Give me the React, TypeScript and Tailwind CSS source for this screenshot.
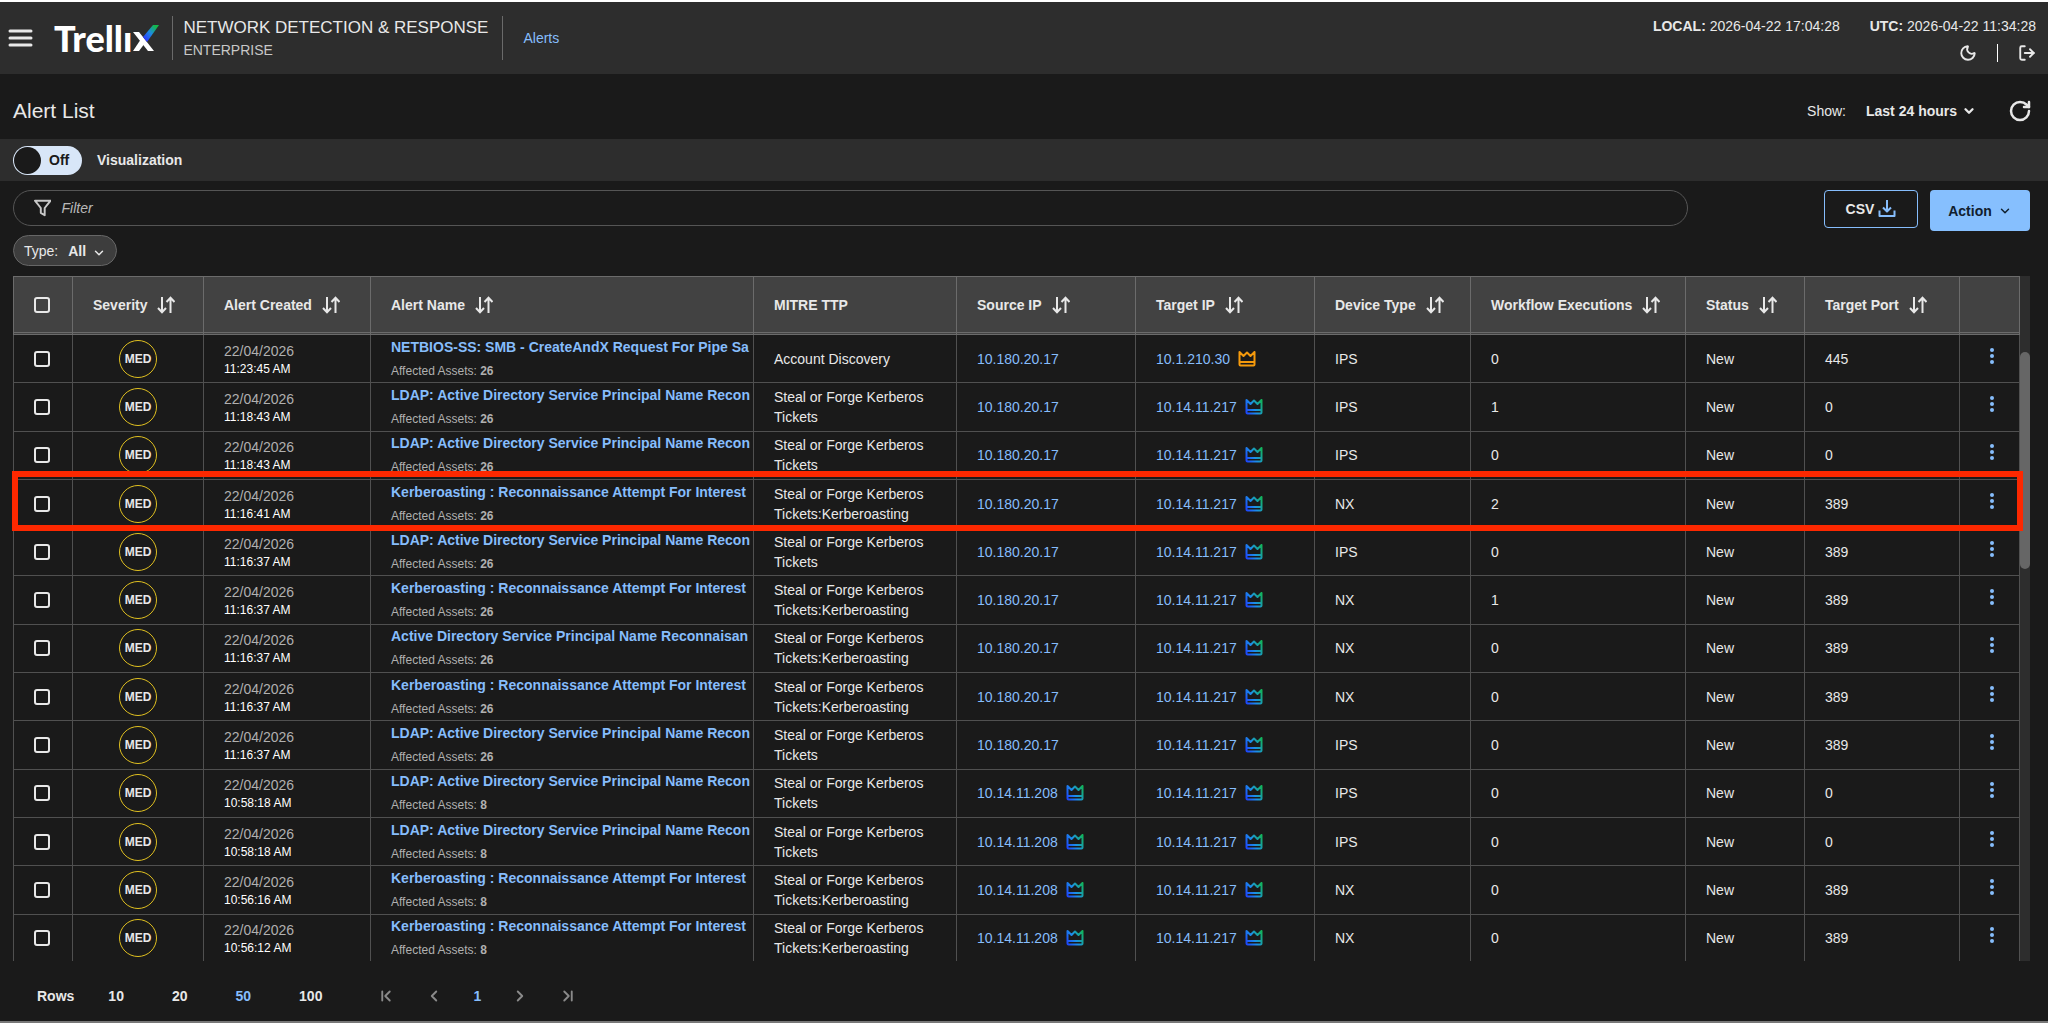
import { ChevronDown, ChevronFirst, ChevronLast, ChevronLeft, ChevronRight, LogOut, Moon, RotateCw } from 'lucide-react'

type Alert = {
  time: string
  name: string
  assets: number
  ttp: string
  source: string
  target: string
  device: 'IPS' | 'NX'
  workflows: number
  port: number
  highlight?: boolean
}

const LDAP = 'LDAP: Active Directory Service Principal Name Recon'
const KERB = 'Kerberoasting : Reconnaissance Attempt For Interest'
const ADSP = 'Active Directory Service Principal Name Reconnaisan'
const STEAL = 'Steal or Forge Kerberos Tickets'
const STEAL_KERB = 'Steal or Forge Kerberos Tickets:Kerberoasting'

const ALERTS: Alert[] = [
  { time: '11:23:45 AM', name: 'NETBIOS-SS: SMB - CreateAndX Request For Pipe Sa', assets: 26, ttp: 'Account Discovery', source: '10.180.20.17', target: '10.1.210.30', device: 'IPS', workflows: 0, port: 445 },
  { time: '11:18:43 AM', name: LDAP, assets: 26, ttp: STEAL, source: '10.180.20.17', target: '10.14.11.217', device: 'IPS', workflows: 1, port: 0 },
  { time: '11:18:43 AM', name: LDAP, assets: 26, ttp: STEAL, source: '10.180.20.17', target: '10.14.11.217', device: 'IPS', workflows: 0, port: 0 },
  { time: '11:16:41 AM', name: KERB, assets: 26, ttp: STEAL_KERB, source: '10.180.20.17', target: '10.14.11.217', device: 'NX', workflows: 2, port: 389, highlight: true },
  { time: '11:16:37 AM', name: LDAP, assets: 26, ttp: STEAL, source: '10.180.20.17', target: '10.14.11.217', device: 'IPS', workflows: 0, port: 389 },
  { time: '11:16:37 AM', name: KERB, assets: 26, ttp: STEAL_KERB, source: '10.180.20.17', target: '10.14.11.217', device: 'NX', workflows: 1, port: 389 },
  { time: '11:16:37 AM', name: ADSP, assets: 26, ttp: STEAL_KERB, source: '10.180.20.17', target: '10.14.11.217', device: 'NX', workflows: 0, port: 389 },
  { time: '11:16:37 AM', name: KERB, assets: 26, ttp: STEAL_KERB, source: '10.180.20.17', target: '10.14.11.217', device: 'NX', workflows: 0, port: 389 },
  { time: '11:16:37 AM', name: LDAP, assets: 26, ttp: STEAL, source: '10.180.20.17', target: '10.14.11.217', device: 'IPS', workflows: 0, port: 389 },
  { time: '10:58:18 AM', name: LDAP, assets: 8, ttp: STEAL, source: '10.14.11.208', target: '10.14.11.217', device: 'IPS', workflows: 0, port: 0 },
  { time: '10:58:18 AM', name: LDAP, assets: 8, ttp: STEAL, source: '10.14.11.208', target: '10.14.11.217', device: 'IPS', workflows: 0, port: 0 },
  { time: '10:56:16 AM', name: KERB, assets: 8, ttp: STEAL_KERB, source: '10.14.11.208', target: '10.14.11.217', device: 'NX', workflows: 0, port: 389 },
  { time: '10:56:12 AM', name: KERB, assets: 8, ttp: STEAL_KERB, source: '10.14.11.208', target: '10.14.11.217', device: 'NX', workflows: 0, port: 389 },
]

const COLUMNS = [
  { label: 'Severity', width: 'w-[131px]', sortable: true },
  { label: 'Alert Created', width: 'w-[167px]', sortable: true },
  { label: 'Alert Name', width: '', sortable: true },
  { label: 'MITRE TTP', width: 'w-[203px]', sortable: false },
  { label: 'Source IP', width: 'w-[179px]', sortable: true },
  { label: 'Target IP', width: 'w-[179px]', sortable: true },
  { label: 'Device Type', width: 'w-[156px]', sortable: true },
  { label: 'Workflow Executions', width: 'w-[215px]', sortable: true },
  { label: 'Status', width: 'w-[119px]', sortable: true },
  { label: 'Target Port', width: 'w-[155px]', sortable: true },
]

const PAGE_SIZES = [10, 20, 50, 100]

// hosts that carry a crown after their address
const CROWNS: Record<string, string> = {
  '10.1.210.30': '#f59a0c',
  '10.14.11.217': 'url(#crown)',
  '10.14.11.208': 'url(#crown)',
}

const CELL = 'border-r border-b border-[#505050] py-0 pr-3 pl-5'
const HEAD = 'h-[59px] border-t border-r border-b-3 border-[#6b6b6b] [border-bottom-style:double] bg-[#424242] py-0 pl-5 text-left font-bold'

function Logo() {
  return (
    <div className="ml-[21px] flex items-center" role="img" aria-label="Trellix">
      <span className="font-[Lato] text-4xl leading-9 font-black text-white">Trellı</span>
      <svg width="28" height="28" viewBox="0 0 28 28">
        <defs>
          <linearGradient id="tick" x1="0" y1="1" x2="1" y2="0">
            <stop offset="0.15" stopColor="#2a3cff" />
            <stop offset="0.5" stopColor="#1c8be0" />
            <stop offset="0.85" stopColor="#14b84a" />
          </linearGradient>
        </defs>
        <path d="M1 8h6l15 19h-6z" fill="#fff" />
        <path d="M1 27h6l6-8-4-4z" fill="#fff" />
        <path d="M11 13 21 1h6L15 18z" fill="url(#tick)" />
      </svg>
    </div>
  )
}

function SortIcon() {
  return (
    <svg width="18" height="18" viewBox="0 0 18 18" fill="none" stroke="currentColor" strokeWidth="2">
      <path d="M5 1v15M1 12l4 4.300 4-4.300M13.500 17V2M9.500 6l4-4.300 4 4.300" />
    </svg>
  )
}

function Crown({ color }: { color: string }) {
  return (
    <svg width="18" height="16" viewBox="0 0 18 16" fill="none" stroke={color} strokeWidth="2" strokeLinejoin="round">
      <path d="M1.500 1 5.500 5 9 1.500 12.500 5l4-4v12.500a1 1 0 0 1-1 1h-13a1 1 0 0 1-1-1zM2 11h14" />
    </svg>
  )
}

function Checkbox({ label }: { label: string }) {
  return (
    <input
      type="checkbox"
      aria-label={label}
      className="block h-4 w-4 appearance-none rounded-[3px] border-2 border-[#e8e8e8]"
    />
  )
}

function Address({ ip }: { ip: string }) {
  return (
    <div className="flex items-center gap-2">
      <a href="#host" className="text-[#86bdfc]">{ip}</a>
      {CROWNS[ip] && <Crown color={CROWNS[ip]} />}
    </div>
  )
}

function Header() {
  return (
    <header className="flex h-[72px] shrink-0 items-center bg-[#2d2d2d] px-2">
      <button type="button" aria-label="Menu">
        <svg width="25" height="20" viewBox="0 0 25 20" stroke="#e8e8e8" strokeWidth="3" strokeLinecap="round">
          <path d="M2 3h21M2 10h21M2 17h21" />
        </svg>
      </button>
      <Logo />
      <div className="ml-3 flex h-11 flex-col justify-center border-l border-[#6a6a6a] pl-2.5">
        <span className="text-[17px] leading-6">NETWORK DETECTION &amp; RESPONSE</span>
        <span className="text-sm leading-5 text-[#c8c8c8]">ENTERPRISE</span>
      </div>
      <nav className="ml-3.5 flex h-11 items-center border-l border-[#6a6a6a] pl-5">
        <a href="#alerts" className="text-sm text-[#86bdfc]">Alerts</a>
      </nav>
      <div className="ml-auto flex flex-col items-end gap-2 pt-0.5 pr-1">
        <div className="flex gap-[30px] text-sm leading-5">
          <span><b>LOCAL:</b> 2026-04-22 17:04:28</span>
          <span><b>UTC:</b> 2026-04-22 11:34:28</span>
        </div>
        <div className="flex items-center gap-5">
          <button type="button" aria-label="Dark mode"><Moon size={18} strokeWidth={2.5} /></button>
          <span className="h-[18px] w-px bg-white" />
          <button type="button" aria-label="Log out"><LogOut size={18} strokeWidth={2.5} /></button>
        </div>
      </div>
    </header>
  )
}

function TitleBar() {
  return (
    <div className="flex h-[65px] shrink-0 items-center pt-2 pr-4 pl-[13px]">
      <h1 className="text-[21px]">Alert List</h1>
      <label htmlFor="range" className="ml-auto">Show:</label>
      <div className="ml-5 flex items-center gap-1">
        <select id="range" className="appearance-none bg-transparent font-bold">
          <option>Last 24 hours</option>
        </select>
        <ChevronDown size={14} strokeWidth={4} />
      </div>
      <button type="button" aria-label="Refresh" className="ml-8"><RotateCw size={24} strokeWidth={2.5} /></button>
    </div>
  )
}

function VisualizationBar() {
  return (
    <div className="flex h-[42px] shrink-0 items-center bg-[#2d2d2d] pl-[13px]">
      <label className="flex items-center gap-[15px] font-bold">
        <input type="checkbox" role="switch" className="peer sr-only" />
        <span className="flex h-[29px] w-[69px] items-center gap-2 rounded-full bg-[#d8e6f8] pl-px text-[#1a1a1a]">
          <span className="h-[27px] w-[27px] rounded-full bg-[#1a1a1a]" />
          Off
        </span>
        Visualization
      </label>
    </div>
  )
}

function Toolbar() {
  return (
    <div className="flex shrink-0 items-start pt-[9px] pr-[18px] pb-2.5 pl-[13px]">
      <div className="flex-1">
        <label className="flex h-9 items-center gap-2.5 rounded-full border border-[#555] pl-5">
          <svg width="18" height="18" viewBox="0 0 18 18" fill="none" stroke="#c8c8c8" strokeWidth="2" strokeLinejoin="round">
            <path d="M1 1.500h16L11 9v7.500L7 14V9z" />
          </svg>
          <input
            type="text"
            aria-label="Filter"
            placeholder="Filter"
            className="mr-5 w-full bg-transparent text-sm italic outline-none placeholder:text-[#b8b8b8]"
          />
        </label>
        <div className="mt-[9px] flex h-[31px] w-fit items-center rounded-full border border-[#666] bg-[#3d3d3d] px-2.5">
          <label htmlFor="type">Type:</label>
          <select id="type" className="ml-2.5 appearance-none bg-transparent font-bold">
            <option>All</option>
          </select>
          <ChevronDown size={14} strokeWidth={2.5} className="mt-1 ml-1.5" />
        </div>
      </div>
      <button type="button" className="ml-[136px] flex h-[38px] w-[94px] items-center justify-center gap-1 rounded border border-[#86bdfc] font-bold">
        CSV
        <svg width="18" height="18" viewBox="0 0 18 18" fill="none" stroke="#86bdfc" strokeWidth="2" strokeLinejoin="round">
          <path d="M9 0v11M5 7.500l4 4 4-4M1.500 10.500v5.500h15v-5.500" />
        </svg>
      </button>
      <button type="button" className="ml-3 flex h-[41px] w-[100px] items-center justify-center gap-1.5 rounded bg-[#86bffe] font-bold text-[#10202f]">
        Action <ChevronDown size={14} strokeWidth={2.5} />
      </button>
    </div>
  )
}

function AlertRow({ alert }: { alert: Alert }) {
  return (
    <tr className="relative">
      <td className="border-r border-b border-l border-[#505050] py-0 pl-5">
        <Checkbox label={`Select ${alert.name}`} />
        {alert.highlight && (
          <span className="pointer-events-none absolute -top-[9px] -right-[3px] -bottom-[3px] -left-px z-10 border-6 border-[#fd2800]" />
        )}
      </td>
      <td className="border-r border-b border-[#505050] p-0">
        <span className="mx-auto grid h-[38px] w-[38px] place-items-center rounded-full border border-[#e0c020] text-xs font-bold">MED</span>
      </td>
      <td className={CELL}>
        <div className="leading-5 text-[#b0b0b0]">22/04/2026</div>
        <div className="text-xs leading-4 text-white">{alert.time}</div>
      </td>
      <td className="overflow-hidden border-r border-b border-[#505050] py-0 pl-5 whitespace-nowrap">
        <a href="#alert" className="block leading-5 font-bold text-[#86bdfc]">{alert.name}</a>
        <div className="mt-1 text-xs leading-5 text-[#b0b0b0]">Affected Assets: <b>{alert.assets}</b></div>
      </td>
      <td className={CELL}><div className="leading-5">{alert.ttp}</div></td>
      <td className={CELL}><Address ip={alert.source} /></td>
      <td className={CELL}><Address ip={alert.target} /></td>
      <td className={CELL}>{alert.device}</td>
      <td className={CELL}>{alert.workflows}</td>
      <td className={CELL}>New</td>
      <td className={CELL}>{alert.port}</td>
      <td className="border-r border-b border-[#505050] py-0 pr-0 pl-1">
        <button type="button" aria-label="Row actions" className="mx-auto mb-1.5 block">
          <svg width="6" height="18" viewBox="0 0 6 18" fill="#86bdfc">
            <circle cx="3" cy="3" r="2" />
            <circle cx="3" cy="9" r="2" />
            <circle cx="3" cy="15" r="2" />
          </svg>
        </button>
      </td>
    </tr>
  )
}

function AlertTable() {
  return (
    <div className="flex min-h-0 flex-1 overflow-hidden pr-[18px] pl-[13px]">
      <div className="h-[calc(100%+2px)] min-w-0 flex-1">
        <table className="h-full w-full table-fixed border-separate border-spacing-0">
          <thead>
            <tr>
              <th className={`${HEAD} w-[60px] border-l`}><Checkbox label="Select all" /></th>
              {COLUMNS.map((col) => (
                <th key={col.label} className={`${HEAD} ${col.width}`}>
                  <div className="flex items-center gap-2.5 whitespace-nowrap">
                    {col.label}
                    {col.sortable && <button type="button" aria-label={`Sort by ${col.label}`}><SortIcon /></button>}
                  </div>
                </th>
              ))}
              <th className={`${HEAD} w-[60px]`} aria-label="Actions" />
            </tr>
          </thead>
          <tbody>
            {ALERTS.map((alert, i) => (
              <AlertRow key={i} alert={alert} />
            ))}
          </tbody>
        </table>
      </div>
      <div className="w-2.5 bg-[#2d2d2d] pt-[76px]">
        <div className="h-[217px] rounded-full bg-[#666]" />
      </div>
    </div>
  )
}

function Pager() {
  return (
    <footer className="flex h-[60px] shrink-0 items-center pt-3 pb-0.5 pl-[37px] font-bold">
      <span className="mr-[34px]">Rows</span>
      <div className="flex gap-12">
        {PAGE_SIZES.map((size) => (
          <button key={size} type="button" className={size === 50 ? 'text-[#86bdfc]' : ''}>{size}</button>
        ))}
      </div>
      <div className="ml-[55px] flex items-center gap-[30px] text-[#8a8a8a]">
        <button type="button" aria-label="First page"><ChevronFirst size={18} strokeWidth={2.5} /></button>
        <button type="button" aria-label="Previous page"><ChevronLeft size={18} strokeWidth={2.5} /></button>
        <button type="button" className="text-[#86bdfc]">1</button>
        <button type="button" aria-label="Next page"><ChevronRight size={18} strokeWidth={2.5} /></button>
        <button type="button" aria-label="Last page"><ChevronLast size={18} strokeWidth={2.5} /></button>
      </div>
    </footer>
  )
}

export default function App() {
  return (
    <div className="flex h-screen flex-col border-t-2 border-b-2 border-t-white border-b-[#777] bg-[#1a1a1a] font-['Liberation_Sans',Arial,sans-serif] text-sm text-[#e8e8e8]">
      <svg width="0" height="0" className="absolute">
        <linearGradient id="crown" gradientUnits="userSpaceOnUse" x1="0" y1="14" x2="18" y2="4">
          <stop offset="0" stopColor="#1d3cff" />
          <stop offset="0.5" stopColor="#1c90e8" />
          <stop offset="1" stopColor="#12b45a" />
        </linearGradient>
      </svg>
      <Header />
      <TitleBar />
      <VisualizationBar />
      <Toolbar />
      <AlertTable />
      <Pager />
    </div>
  )
}
